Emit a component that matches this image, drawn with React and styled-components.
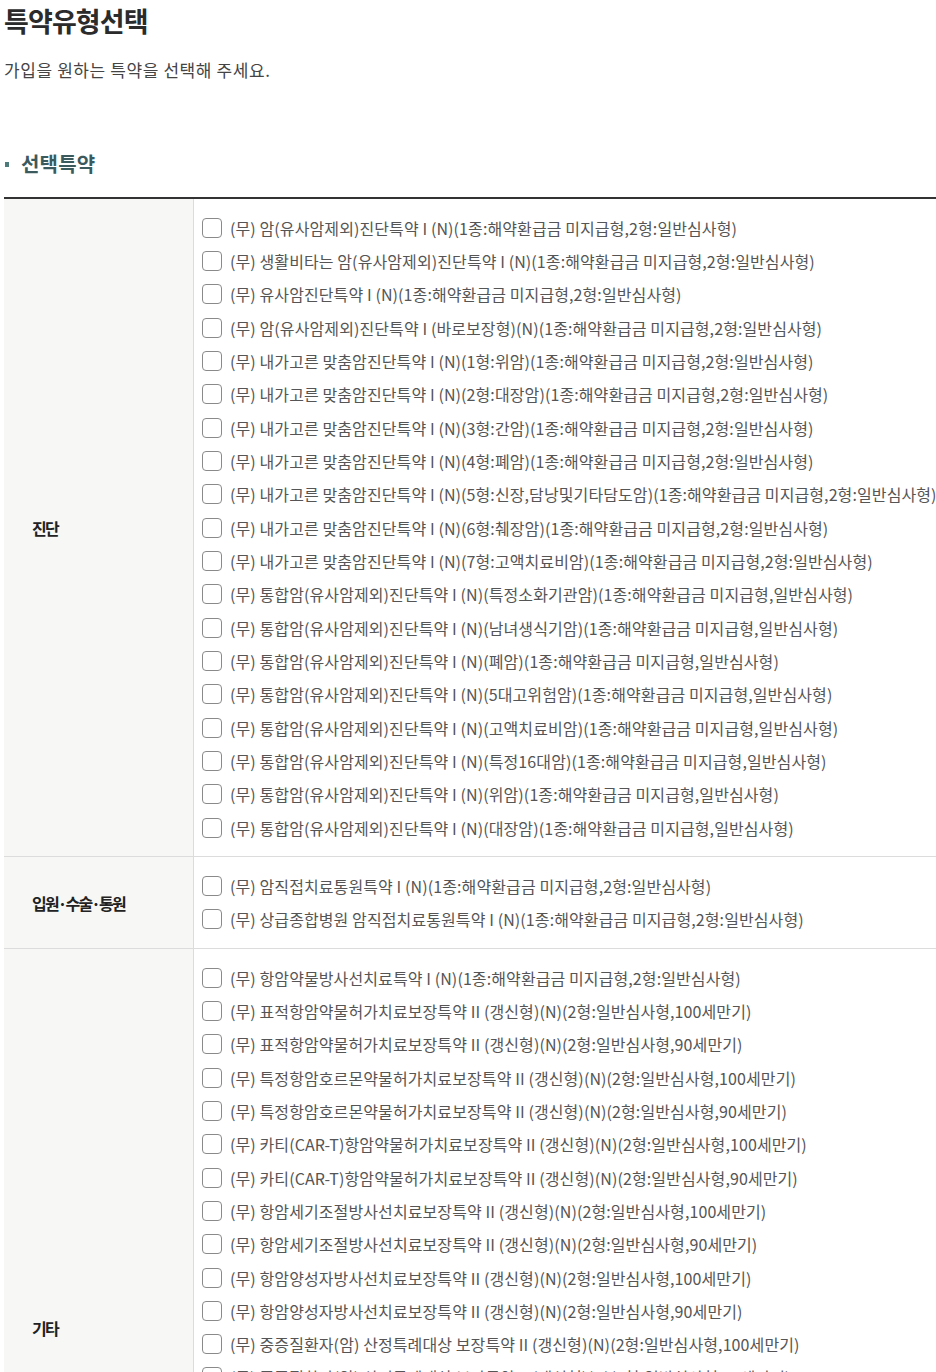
import React from 'react';
import styled, { createGlobalStyle } from 'styled-components';

const GlobalStyle = createGlobalStyle`
    body {
        margin: 0;
        background: #fff;
        font-family: "Noto Sans CJK KR", "Noto Sans", sans-serif;
        color: #333;
    }
`

const Page = styled.div`
    padding: 0 0 0 4px;
    overflow: hidden;
`
const Title = styled.h1`
    margin: 0;
    padding-top: 3px;
    font-size: 27px;
    font-weight: 700;
    letter-spacing: -0.9px;
    line-height: 36px;
    color: #2b2b2b;
`
const Desc = styled.p`
    margin: 17px 0 0;
    font-size: 17px;
    line-height: 28px;
    letter-spacing: 0.6px;
    color: #444;
`
const SectionTitle = styled.h2`
    display: flex;
    align-items: center;
    gap: 12px;
    margin: 64px 0 0;
    font-size: 20px;
    font-weight: 700;
    line-height: 32px;
    letter-spacing: 0.2px;
    color: #3b5a5e;

    &::before {
        content: '';
        width: 4px;
        height: 5px;
        margin-left: 1px;
        background: #4d7a7a;
    }
`
const Table = styled.div`
    margin-top: 17px;
    border-top: 2px solid #333;
    width: 100%;
`
const Row = styled.div`
    display: grid;
    grid-template-columns: 190px 1fr;
    border-bottom: 1px solid #dcdcdc;
`
const Head = styled.div`
    display: flex;
    align-items: center;
    padding-left: 28px;
    background: #f7f7f5;
    border-right: 1px solid #dcdcdc;
    font-size: 16px;
    font-weight: 700;
    letter-spacing: -1.8px;
    color: #222;
`
const Cell = styled.div`
    padding: 12px 0 12px 8px;
`
const Item = styled.label`
    display: flex;
    align-items: center;
    gap: 8px;
    height: 33.333px;
    font-size: 16px;
    letter-spacing: 0.1px;
    color: #555;
    white-space: nowrap;
`
const Box = styled.input.attrs({ type: 'checkbox' })`
    appearance: none;
    margin: 0;
    flex: none;
    width: 20px;
    height: 20px;
    border: 1.5px solid #8a8a8a;
    border-radius: 4px;
    background: #fff;
`

const groups = [
    {
        name: '진단',
        items: [
            '(무) 암(유사암제외)진단특약 I (N)(1종:해약환급금 미지급형,2형:일반심사형)',
            '(무) 생활비타는 암(유사암제외)진단특약 I (N)(1종:해약환급금 미지급형,2형:일반심사형)',
            '(무) 유사암진단특약 I (N)(1종:해약환급금 미지급형,2형:일반심사형)',
            '(무) 암(유사암제외)진단특약 I (바로보장형)(N)(1종:해약환급금 미지급형,2형:일반심사형)',
            '(무) 내가고른 맞춤암진단특약 I (N)(1형:위암)(1종:해약환급금 미지급형,2형:일반심사형)',
            '(무) 내가고른 맞춤암진단특약 I (N)(2형:대장암)(1종:해약환급금 미지급형,2형:일반심사형)',
            '(무) 내가고른 맞춤암진단특약 I (N)(3형:간암)(1종:해약환급금 미지급형,2형:일반심사형)',
            '(무) 내가고른 맞춤암진단특약 I (N)(4형:폐암)(1종:해약환급금 미지급형,2형:일반심사형)',
            '(무) 내가고른 맞춤암진단특약 I (N)(5형:신장,담낭및기타담도암)(1종:해약환급금 미지급형,2형:일반심사형)',
            '(무) 내가고른 맞춤암진단특약 I (N)(6형:췌장암)(1종:해약환급금 미지급형,2형:일반심사형)',
            '(무) 내가고른 맞춤암진단특약 I (N)(7형:고액치료비암)(1종:해약환급금 미지급형,2형:일반심사형)',
            '(무) 통합암(유사암제외)진단특약 I (N)(특정소화기관암)(1종:해약환급금 미지급형,일반심사형)',
            '(무) 통합암(유사암제외)진단특약 I (N)(남녀생식기암)(1종:해약환급금 미지급형,일반심사형)',
            '(무) 통합암(유사암제외)진단특약 I (N)(폐암)(1종:해약환급금 미지급형,일반심사형)',
            '(무) 통합암(유사암제외)진단특약 I (N)(5대고위험암)(1종:해약환급금 미지급형,일반심사형)',
            '(무) 통합암(유사암제외)진단특약 I (N)(고액치료비암)(1종:해약환급금 미지급형,일반심사형)',
            '(무) 통합암(유사암제외)진단특약 I (N)(특정16대암)(1종:해약환급금 미지급형,일반심사형)',
            '(무) 통합암(유사암제외)진단특약 I (N)(위암)(1종:해약환급금 미지급형,일반심사형)',
            '(무) 통합암(유사암제외)진단특약 I (N)(대장암)(1종:해약환급금 미지급형,일반심사형)',
        ],
    },
    {
        name: '입원·수술·통원',
        items: [
            '(무) 암직접치료통원특약 I (N)(1종:해약환급금 미지급형,2형:일반심사형)',
            '(무) 상급종합병원 암직접치료통원특약 I (N)(1종:해약환급금 미지급형,2형:일반심사형)',
        ],
    },
    {
        name: '기타',
        items: [
            '(무) 항암약물방사선치료특약 I (N)(1종:해약환급금 미지급형,2형:일반심사형)',
            '(무) 표적항암약물허가치료보장특약 II (갱신형)(N)(2형:일반심사형,100세만기)',
            '(무) 표적항암약물허가치료보장특약 II (갱신형)(N)(2형:일반심사형,90세만기)',
            '(무) 특정항암호르몬약물허가치료보장특약 II (갱신형)(N)(2형:일반심사형,100세만기)',
            '(무) 특정항암호르몬약물허가치료보장특약 II (갱신형)(N)(2형:일반심사형,90세만기)',
            '(무) 카티(CAR-T)항암약물허가치료보장특약 II (갱신형)(N)(2형:일반심사형,100세만기)',
            '(무) 카티(CAR-T)항암약물허가치료보장특약 II (갱신형)(N)(2형:일반심사형,90세만기)',
            '(무) 항암세기조절방사선치료보장특약 II (갱신형)(N)(2형:일반심사형,100세만기)',
            '(무) 항암세기조절방사선치료보장특약 II (갱신형)(N)(2형:일반심사형,90세만기)',
            '(무) 항암양성자방사선치료보장특약 II (갱신형)(N)(2형:일반심사형,100세만기)',
            '(무) 항암양성자방사선치료보장특약 II (갱신형)(N)(2형:일반심사형,90세만기)',
            '(무) 중증질환자(암) 산정특례대상 보장특약 II (갱신형)(N)(2형:일반심사형,100세만기)',
            '(무) 중증질환자(암) 산정특례대상 보장특약 II (갱신형)(N)(2형:일반심사형,90세만기)',
            '(무) 항암중입자방사선치료보장특약 II (갱신형)(N)(2형:일반심사형,100세만기)',
            '(무) 항암중입자방사선치료보장특약 II (갱신형)(N)(2형:일반심사형,90세만기)',
            '(무) 암주요치료비보장특약 II (갱신형)(N)(2형:일반심사형,100세만기)',
            '(무) 암주요치료비보장특약 II (갱신형)(N)(2형:일반심사형,90세만기)',
            '(무) 다빈치로봇암수술특약 I (N)(1종:해약환급금 미지급형,2형:일반심사형)',
            '(무) 암수술특약 I (N)(1종:해약환급금 미지급형,2형:일반심사형)',
            '(무) 암입원특약 I (N)(1종:해약환급금 미지급형,2형:일반심사형)',
            '(무) 암요양병원입원특약 I (N)(1종:해약환급금 미지급형,2형:일반심사형)',
            '(무) 항암방사선약물치료특약 I (N)(1종:해약환급금 미지급형,2형:일반심사형)',
        ],
    },
]

export default function App() {
    return (
        <Page>
            <GlobalStyle />
            <Title>특약유형선택</Title>
            <Desc>가입을 원하는 특약을 선택해 주세요.</Desc>
            <SectionTitle>선택특약</SectionTitle>
            <Table>
                {groups.map(group => (
                    <Row key={group.name}>
                        <Head>{group.name}</Head>
                        <Cell>
                            {group.items.map((text, i) => (
                                <Item key={i}>
                                    <Box />
                                    {text}
                                </Item>
                            ))}
                        </Cell>
                    </Row>
                ))}
            </Table>
        </Page>
    )
}
